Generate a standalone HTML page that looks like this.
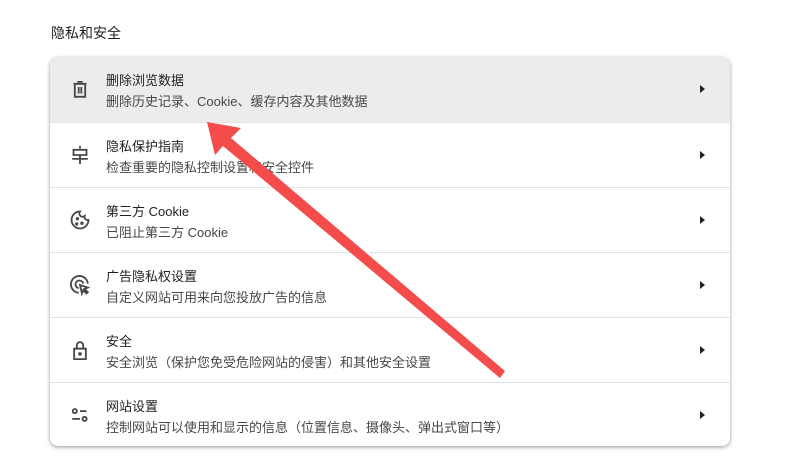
<!DOCTYPE html>
<html><head><meta charset="utf-8"><style>
body{margin:0;width:797px;height:471px;background:#fff;font-family:"Liberation Sans","Noto Sans CJK SC",sans-serif;position:relative;overflow:hidden;color:#1f1f1f}
.h{position:absolute;left:51px;top:23px;font-size:14px;color:#1f1f1f}
.card{position:absolute;left:50px;top:57px;width:680px;height:389px;border-radius:8px;background:#fff;box-shadow:0 1px 3px rgba(0,0,0,.3),0 2px 6px rgba(0,0,0,.12);overflow:hidden}
.row{position:relative;height:65px;border-top:1px solid #e3e3e3;box-sizing:border-box}
.row:first-child{border-top:none;background:#ececec}
.t{position:absolute;left:56px;top:13px;font-size:13px;color:#1f1f1f}
.s{position:absolute;left:56px;top:34px;font-size:13px;color:#474747}
.ic{position:absolute;left:17px;top:19px;width:26px;height:26px}
.ch{position:absolute;left:650px;top:28px;width:0;height:0;border-left:5px solid #222;border-top:4.5px solid transparent;border-bottom:4.5px solid transparent}
svg.ic{fill:none;stroke:#474747;stroke-width:1.4}
</style></head><body>
<div class="h">隐私和安全</div>
<div class="card">
<div class="row"><svg class="ic" viewBox="0 0 20 20"><path d="M5 6h10M8 4.5h4M6 6v10h8V6M9 8.5v5M11 8.5v5"/></svg><div class="t">删除浏览数据</div><div class="s">删除历史记录、Cookie、缓存内容及其他数据</div><div class="ch"></div></div>
<div class="row"><svg class="ic" viewBox="0 0 20 20"><path d="M10 3v2M5 6h10v4H5zM4 13h12M10 10v7"/></svg><div class="t">隐私保护指南</div><div class="s">检查重要的隐私控制设置和安全控件</div><div class="ch"></div></div>
<div class="row"><svg class="ic" viewBox="0 0 20 20"><path d="M10 3.5a6.5 6.5 0 1 0 6.5 6.5 2.5 2.5 0 0 1-3-3 2.5 2.5 0 0 1-3.5-3.5z"/><circle cx="8" cy="9" r=".6"/><circle cx="7.5" cy="13" r=".6"/><circle cx="11.5" cy="12.5" r=".6"/></svg><div class="t">第三方 Cookie</div><div class="s">已阻止第三方 Cookie</div><div class="ch"></div></div>
<div class="row"><svg class="ic" viewBox="0 0 20 20"><path d="M9 16a6.5 6.5 0 1 1 7-7M9 12.5a3 3 0 1 1 3.5-3.5M10 10l6 2-2.5 1 2.5 2.5-1 1-2.5-2.5-1 2.5z"/></svg><div class="t">广告隐私权设置</div><div class="s">自定义网站可用来向您投放广告的信息</div><div class="ch"></div></div>
<div class="row"><svg class="ic" viewBox="0 0 20 20"><path d="M5.5 9h9v8h-9zM7.5 9V6.5a2.5 2.5 0 0 1 5 0V9"/><circle cx="10" cy="13" r=".7"/></svg><div class="t">安全</div><div class="s">安全浏览（保护您免受危险网站的侵害）和其他安全设置</div><div class="ch"></div></div>
<div class="row"><svg class="ic" viewBox="0 0 20 20"><circle cx="6" cy="7" r="1.6"/><path d="M10 7h5M4 13h6"/><circle cx="13.5" cy="13" r="1.6"/></svg><div class="t">网站设置</div><div class="s">控制网站可以使用和显示的信息（位置信息、摄像头、弹出式窗口等）</div><div class="ch"></div></div>
</div>
<svg style="position:absolute;left:0;top:0" width="797" height="471"><polygon points="207,122 241,128 231,138 505,371 500,378 223,146 215,155" fill="#f44b4b"/></svg>
</body></html>
